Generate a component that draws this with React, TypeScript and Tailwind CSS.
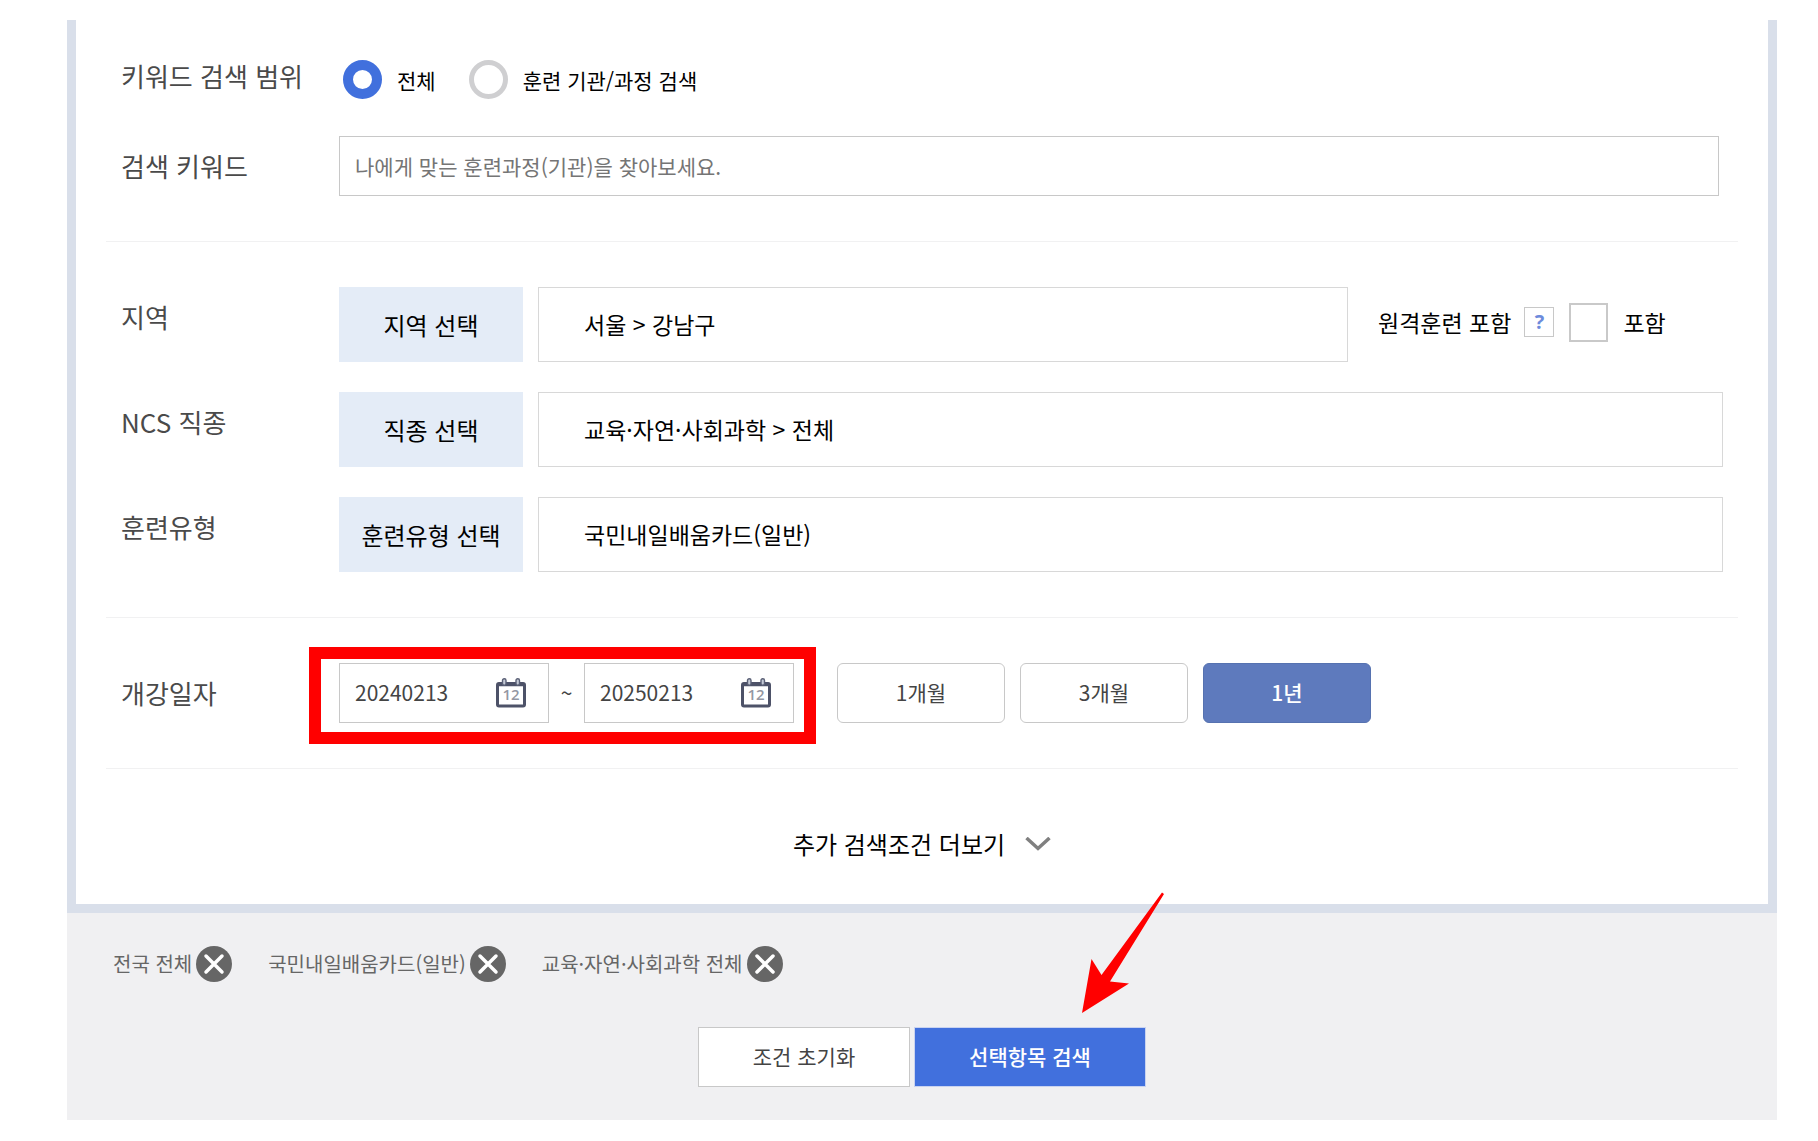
import React from "react";

const DIVIDER = "border-b border-[#f1f1f2]";
const ROW_LABEL = "w-[218px] shrink-0 text-[26px] leading-8 text-[#4a4a4a]";

const CalendarIcon: React.FC = () => (
  <svg width="30" height="30" viewBox="0 0 30 30" fill="none" aria-hidden="true">
    <rect x="1.5" y="5.5" width="27" height="22.5" rx="1.5" fill="#fff" stroke="#4d5268" strokeWidth="3" />
    <path d="M2 6.500h26" stroke="#4d5268" strokeWidth="3.500" />
    <rect x="6.5" y="0.800" width="3.500" height="6.500" rx="1.700" fill="#c5cad6" stroke="#5a6076" strokeWidth="1.4" />
    <rect x="20" y="0.800" width="3.500" height="6.500" rx="1.700" fill="#c5cad6" stroke="#5a6076" strokeWidth="1.4" />
    <text
      x="15"
      y="22"
      textAnchor="middle"
      fontSize="15"
      fontWeight="600"
      fontFamily="'Open Sans', sans-serif"
      fill="#9497a3"
    >
      12
    </text>
  </svg>
);

const RemoveIcon: React.FC = () => (
  <svg width="36" height="36" viewBox="0 0 36 36" fill="none" aria-hidden="true">
    <circle cx="18" cy="18" r="18" fill="#666" />
    <path d="M10 10l16 16M26 10L10 26" stroke="#fff" strokeWidth="3.500" strokeLinecap="round" />
  </svg>
);

interface ScopeRadioProps {
  id: string;
  label: string;
  defaultChecked?: boolean;
}

const ScopeRadio: React.FC<ScopeRadioProps> = ({ id, label, defaultChecked }) => (
  <div className="flex items-center gap-[15px]">
    <input
      type="radio"
      id={id}
      name="scope"
      defaultChecked={defaultChecked}
      className="size-[39px] appearance-none rounded-full border-5 border-[#cfcfd1] bg-white checked:border-10 checked:border-[#4170dd]"
    />
    <label htmlFor={id} className="text-[21px] leading-[30px] text-black">
      {label}
    </label>
  </div>
);

interface SelectRowProps {
  title: string;
  button: string;
  value: string;
  children?: React.ReactNode;
}

const SelectRow: React.FC<SelectRowProps> = ({ title, button, value, children }) => (
  <div className="flex items-start">
    <span className={`${ROW_LABEL} pt-[14px]`}>{title}</span>
    <button type="button" className="h-[75px] w-[184px] shrink-0 bg-[#e4ecf7] text-2xl text-black">
      {button}
    </button>
    <div className="ml-[15px] flex h-[75px] min-w-0 flex-1 items-center border border-[#d8d8d8] pl-[45px] text-[23px] text-black">
      {value}
    </div>
    {children}
  </div>
);

interface DateFieldProps {
  label: string;
  value: string;
}

const DateField: React.FC<DateFieldProps> = ({ label, value }) => (
  <div className="flex h-[60px] w-[210px] items-center border border-[#c8c8c8] bg-white pr-[22px] pl-[15px]">
    <input
      type="text"
      aria-label={label}
      defaultValue={value}
      className="w-full min-w-0 flex-1 text-[21px] text-[#444] outline-none"
    />
    <button type="button" aria-label={`${label} 달력`} className="shrink-0">
      <CalendarIcon />
    </button>
  </div>
);

const periods = [
  { label: "1개월", active: false },
  { label: "3개월", active: false },
  { label: "1년", active: true },
];

const chips = ["전국 전체", "국민내일배움카드(일반)", "교육·자연·사회과학 전체"];

const App: React.FC = () => {
  return (
    <main
      lang="ko"
      className="mt-5 mr-[41px] mb-[21px] ml-[67px] bg-white font-['Noto_Sans_CJK_KR',sans-serif]"
    >
      <div className="border-x-9 border-b-9 border-[#d9dfea] px-[30px]">
        <section className={`pt-10 pr-[15px] pb-[45px] pl-[15px] ${DIVIDER}`}>
          <div className="flex items-start" role="radiogroup" aria-labelledby="scope-title">
            <span id="scope-title" className={ROW_LABEL}>
              키워드 검색 범위
            </span>
            <div className="flex gap-[33px] pl-1">
              <ScopeRadio id="scope-all" label="전체" defaultChecked />
              <ScopeRadio id="scope-course" label="훈련 기관/과정 검색" />
            </div>
          </div>
          <div className="mt-[37px] flex items-center">
            <label htmlFor="keyword" className={ROW_LABEL}>
              검색 키워드
            </label>
            <input
              id="keyword"
              type="text"
              placeholder="나에게 맞는 훈련과정(기관)을 찾아보세요."
              className="mr-1 h-[60px] min-w-0 flex-1 border border-[#c8c8c8] px-[15px] text-[21px] text-[#444] placeholder:text-[#757575]"
            />
          </div>
        </section>

        <section className={`flex flex-col gap-[30px] px-[15px] py-[45px] ${DIVIDER}`}>
          <SelectRow title="지역" button="지역 선택" value="서울 > 강남구">
            <div className="flex h-[70px] w-[375px] shrink-0 items-center pl-[30px] text-[23px] text-black">
              <span>원격훈련 포함</span>
              <button
                type="button"
                aria-label="도움말"
                className="ml-[13px] flex size-[30px] items-center justify-center border border-[#c8c8c8] font-['Open_Sans',sans-serif] text-xl leading-none font-bold text-[#6d8bdc]"
              >
                ?
              </button>
              <input
                type="checkbox"
                id="include-remote"
                className="mx-[15px] size-[39px] appearance-none border-2 border-[#c9c9c9] bg-white checked:bg-[#4170dd]"
              />
              <label htmlFor="include-remote">포함</label>
            </div>
          </SelectRow>
          <SelectRow title="NCS 직종" button="직종 선택" value="교육·자연·사회과학 > 전체" />
          <SelectRow title="훈련유형" button="훈련유형 선택" value="국민내일배움카드(일반)" />
        </section>

        <section className={`flex items-center px-[15px] py-[45px] ${DIVIDER}`}>
          <span className={ROW_LABEL}>개강일자</span>
          <div className="relative flex items-center">
            <DateField label="시작일" value="20240213" />
            <span className="w-[35px] text-center text-[21px] text-[#444]">~</span>
            <DateField label="종료일" value="20250213" />
            <div className="pointer-events-none absolute -top-4 -right-[22px] -bottom-[21px] -left-[30px] border-12 border-[#ff0000]" />
          </div>
          <div className="ml-[43px] flex gap-[15px]">
            {periods.map((period) => (
              <button
                key={period.label}
                type="button"
                aria-pressed={period.active}
                className={
                  period.active
                    ? "h-[60px] w-[168px] rounded-md border border-[#5672b0] bg-[#5e7abd] text-[21px] font-medium text-white"
                    : "h-[60px] w-[168px] rounded-md border border-[#c8c8c8] bg-white text-[21px] text-[#444]"
                }
              >
                {period.label}
              </button>
            ))}
          </div>
        </section>

        <div className="flex justify-center pt-[57px] pb-[42px]">
          <button type="button" className="flex items-center gap-5 text-2xl leading-9 text-black">
            추가 검색조건 더보기
            <svg width="26" height="14" viewBox="0 0 26 14" fill="none" aria-hidden="true">
              <path d="M1.5 1L13 11.5L24.5 1" stroke="#808080" strokeWidth="3.500" />
            </svg>
          </button>
        </div>
      </div>

      <div className="bg-[#f0f0f2] px-[46px] pt-[33px] pb-[33px]">
        <ul className="flex gap-9">
          {chips.map((chip) => (
            <li key={chip} className="flex items-center gap-1 text-xl text-[#666]">
              {chip}
              <button type="button" aria-label={`${chip} 삭제`}>
                <RemoveIcon />
              </button>
            </li>
          ))}
        </ul>
        <div className="mt-[45px] flex justify-center gap-1">
          <button type="reset" className="h-[60px] w-[212px] border border-[#c8c8c8] bg-white text-[21px] text-[#444]">
            조건 초기화
          </button>
          <div className="relative">
            <button
              type="submit"
              className="h-[60px] w-[232px] border border-[#c9d3f0] bg-[#4170dd] text-[21px] font-medium text-white"
            >
              선택항목 검색
            </button>
            <svg
              width="84"
              height="122"
              viewBox="0 0 84 122"
              className="pointer-events-none absolute bottom-[73px] left-[167px]"
              aria-hidden="true"
            >
              <path d="M81 0.5L83 2L29 89.500L48 91.500L1 121L10.500 67L20.500 83Z" fill="#ff0000" />
            </svg>
          </div>
        </div>
      </div>
    </main>
  );
};

export default App;
